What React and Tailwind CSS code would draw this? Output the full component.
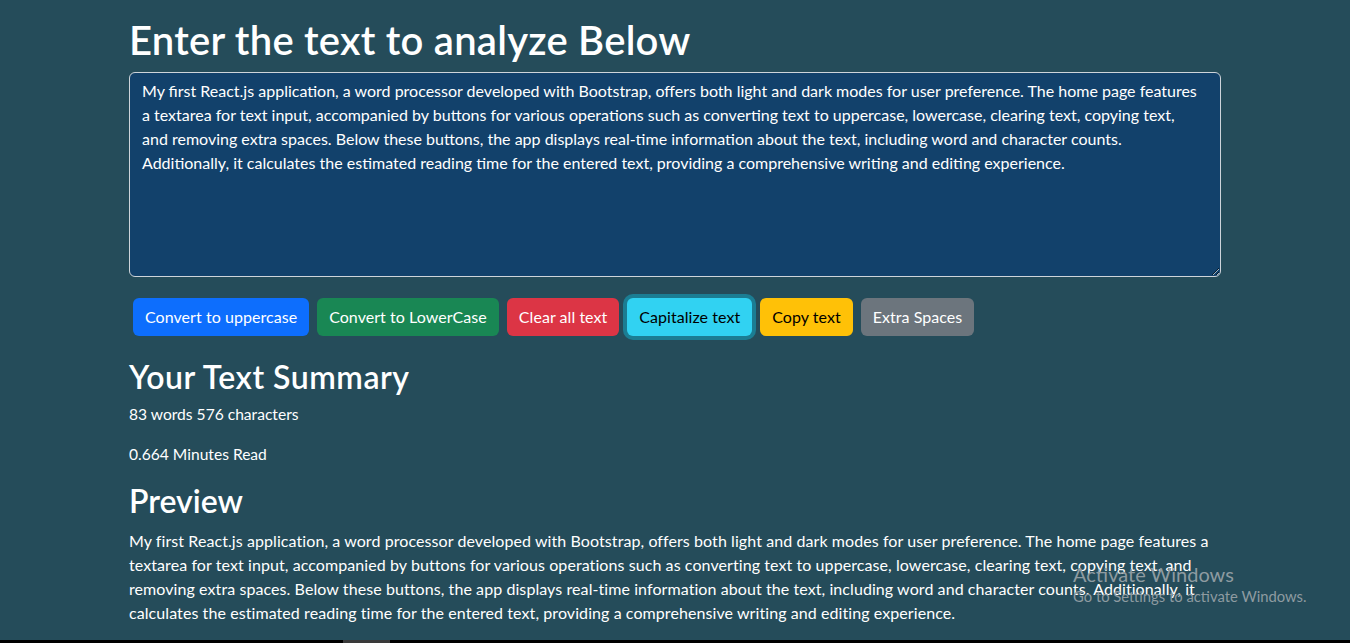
import React from "react";

const areaText = [
  "My first React.js application, a word processor developed with Bootstrap, offers both light and dark modes for user preference. The home page features",
  "a textarea for text input, accompanied by buttons for various operations such as converting text to uppercase, lowercase, clearing text, copying text,",
  "and removing extra spaces. Below these buttons, the app displays real-time information about the text, including word and character counts.",
  "Additionally, it calculates the estimated reading time for the entered text, providing a comprehensive writing and editing experience.",
].join("\n");

const previewLines = [
  "My first React.js application, a word processor developed with Bootstrap, offers both light and dark modes for user preference. The home page features a",
  "textarea for text input, accompanied by buttons for various operations such as converting text to uppercase, lowercase, clearing text, copying text, and",
  "removing extra spaces. Below these buttons, the app displays real-time information about the text, including word and character counts. Additionally, it",
  "calculates the estimated reading time for the entered text, providing a comprehensive writing and editing experience.",
];

const buttons = [
  { label: "Convert to uppercase", cls: "bg-[#0d6efd] text-white" },
  { label: "Convert to LowerCase", cls: "bg-[#198754] text-white" },
  { label: "Clear all text", cls: "bg-[#dc3545] text-white" },
  { label: "Capitalize text", cls: "bg-[#31d2f2] text-black ring-4 ring-[#1b7d93]" },
  { label: "Copy text", cls: "bg-[#ffc107] text-black" },
  { label: "Extra Spaces", cls: "bg-[#6c757d] text-white" },
];

export default function App() {
  return (
    <div
      className="relative h-[643px] overflow-hidden bg-[#254c5a] text-white"
      style={{ fontFamily: "Lato, 'Noto Sans', sans-serif" }}
    >
      <div className="mx-auto w-[1092px] pt-4">
        <h1 className="mb-2 text-[40px] leading-[48px] font-semibold tracking-[0.25px]">Enter the text to analyze Below</h1>
        <textarea
          className="block h-[205px] w-full rounded-md border border-[#ced4da] bg-[#12416b] px-3 py-1.5 text-base leading-6 text-white outline-none"
          defaultValue={areaText}
        />
        <div className="mt-[21px] flex">
          {buttons.map((b) => (
            <button key={b.label} className={`mx-1 h-[38px] rounded-md px-3 text-base tracking-[0.05px] ${b.cls}`}>
              {b.label}
            </button>
          ))}
        </div>
        <h2 className="mt-[22px] mb-[6px] text-[32px] leading-[38px] font-semibold tracking-[0.5px]">Your Text Summary</h2>
        <p className="mb-4 text-[15.6px] leading-6">83 words 576 characters</p>
        <p className="mb-4 text-[15.6px] leading-6">0.664 Minutes Read</p>
        <h2 className="mb-[9px] text-[32px] leading-[38px] font-semibold">Preview</h2>
        <p className="text-base leading-6 tracking-[0.08px]">
          {previewLines.map((l, i) => (
            <span key={i} className="block whitespace-nowrap">{l}</span>
          ))}
        </p>
      </div>

      <div className="absolute top-[562px] left-[1073px] text-[#8e9ba1]">
        <div className="text-[20px] leading-6">Activate Windows</div>
        <div className="text-[14.8px] leading-5">Go to Settings to activate Windows.</div>
      </div>

      <div className="absolute bottom-0 left-0 flex h-[3px] w-full bg-black">
        <div className="ml-[343px] h-full w-[47px] bg-[#3a3a3a]" />
      </div>
    </div>
  );
}
